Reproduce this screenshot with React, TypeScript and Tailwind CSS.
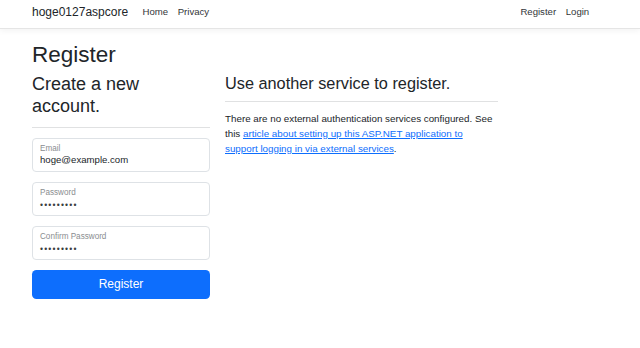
import React from "react";

const font = { fontFamily: '"Liberation Sans", Arial, sans-serif' };

function Field({ label, value, password }: { label: string; value: string; password?: boolean }) {
  return (
    <div className="h-[34px] w-[178px] rounded-[4px] border border-[#dee2e6] bg-white px-[7px] pt-[4.6px] flex flex-col">
      <div className="text-[8.15px] leading-[10px] text-[#8a8d90] whitespace-nowrap">{label}</div>
      {password ? (
        <div className="text-[8.5px] leading-[12px] text-[#3a3d40] tracking-[1.2px] mt-[1.5px] whitespace-nowrap">
          {value}
        </div>
      ) : (
        <div className="text-[9.6px] leading-[12px] text-[#212529] whitespace-nowrap">{value}</div>
      )}
    </div>
  );
}

export default function App() {
  return (
    <div className="w-[640px] h-[348px] bg-white text-[#212529] overflow-hidden" style={font}>
      <nav className="h-[29px] border-b border-[#e5e5e5] bg-white shadow-[0_2px_6px_rgba(0,0,0,0.05)] pl-[32px] w-full">
        <div className="w-[562px] h-[28px] flex items-center pb-[4px]">
          <span className="text-[12px] leading-[18px] text-[#212529] mr-[9.6px] whitespace-nowrap">hoge0127aspcore</span>
          <span className="text-[9.6px] leading-[14.4px] px-[4.8px] text-[#333639]">Home</span>
          <span className="text-[9.6px] leading-[14.4px] px-[4.8px] text-[#333639]">Privacy</span>
          <div className="flex-1" />
          <span className="text-[9.6px] leading-[14.4px] px-[4.8px] text-[#333639]">Register</span>
          <span className="text-[9.6px] leading-[14.4px] px-[4.8px] text-[#333639]">Login</span>
        </div>
      </nav>
      <main className="pl-[32px]">
        <h1 className="mt-[12px] text-[22.5px] leading-[27px] font-medium">Register</h1>
        <div className="mt-[6px] flex gap-[15px]">
          <div className="w-[178px]">
            <h2 className="text-[18px] leading-[21.6px] font-medium">Create a new account.</h2>
            <div className="mt-[9.8px] h-px bg-[#e0e1e2]" />
            <div className="mt-[10px] flex flex-col gap-[10px]">
              <Field label="Email" value="hoge@example.com" />
              <Field label="Password" value="•••••••••" password />
              <Field label="Confirm Password" value="•••••••••" password />
              <button className="h-[29px] w-[178px] rounded-[4.5px] bg-[#0d6efd] text-white text-[12px] leading-[14px]">
                Register
              </button>
            </div>
          </div>
          <div className="w-[273px]">
            <h3 className="text-[16.3px] leading-[19.6px] font-medium whitespace-nowrap">Use another service to register.</h3>
            <div className="mt-[7.4px] h-px bg-[#e0e1e2]" />
            <p className="mt-[8.8px] text-[9.8px] leading-[15px] whitespace-nowrap">
              There are no external authentication services configured. See
              <br />
              this{" "}
              <a className="text-[#0d6efd] underline">
                article about setting up this ASP.NET application to
                <br />
                support logging in via external services
              </a>
              .
            </p>
          </div>
        </div>
      </main>
    </div>
  );
}
